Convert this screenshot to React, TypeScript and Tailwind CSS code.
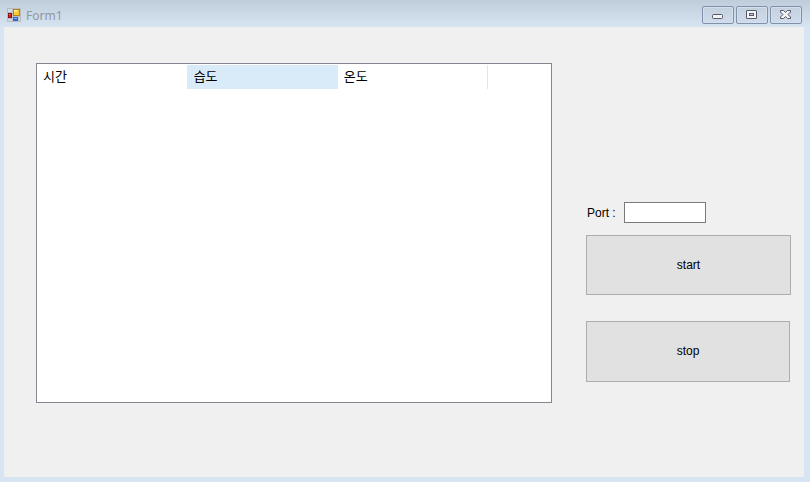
import React, { useState } from 'react';

interface CaptionButtonProps {
  label: string;
  children: React.ReactNode;
}

const columns = ['시간', '습도', '온도'];

const CaptionButton: React.FC<CaptionButtonProps> = ({ label, children }) => (
  <button
    aria-label={label}
    className="w-8 h-[18px] flex items-center justify-center rounded-xs border border-[#8291ab] bg-linear-to-b from-[#c3d0de] to-[#d0dceb] shadow-[inset_0_0_0_1px_#d3dfed]"
  >
    {children}
  </button>
);

const FormIcon = () => (
  <svg width="14" height="14" viewBox="0 0 14 14" shapeRendering="crispEdges" aria-hidden="true">
    <rect x="0" y="0" width="14" height="14" fill="#b9bdc2" />
    <path d="M1 1h4v3H1zM1 11h4v2H1zM12 9h1v4h-1z" fill="#d0dae5" />
    <rect x="1" y="5" width="4" height="5" fill="#8c1210" />
    <rect x="2" y="6" width="2" height="3" fill="#d02a1e" />
    <rect x="2" y="6" width="1" height="1" fill="#f0796b" />
    <rect x="6" y="1" width="7" height="7" fill="#b98410" />
    <rect x="7" y="2" width="5" height="5" fill="#fdc92f" />
    <rect x="7" y="2" width="3" height="2" fill="#ffe891" />
    <rect x="6" y="9" width="5" height="4" fill="#2f6bd0" />
    <rect x="7" y="10" width="3" height="1" fill="#7fb0f5" />
  </svg>
);

const App: React.FC = () => {
  const [port, setPort] = useState('');

  return (
    <div className="min-h-screen flex flex-col bg-[#d7e4f2] pl-1 pr-1.5 pb-[5px] font-['Liberation_Sans','Noto_Sans_CJK_KR',sans-serif] text-xs text-black">
      {/* Title bar */}
      <header className="h-[27px] -ml-1 -mr-1.5 pl-[7px] pr-2 pt-[3px] flex items-center justify-between bg-linear-to-b from-[#bfcddb] to-[#d7e4f2]">
        <div className="flex items-center gap-[5px]">
          <FormIcon />
          <h1 className="pt-0.5 font-['Noto_Sans',sans-serif] text-xs leading-4 text-[#93979d]">Form1</h1>
        </div>
        <div className="flex gap-0.5">
          <CaptionButton label="Minimize">
            <svg width="12" height="6" viewBox="0 0 12 6" className="mt-1">
              <rect x="0.5" y="0.5" width="10" height="4" rx="1" fill="#f4f4f4" stroke="#545768" />
            </svg>
          </CaptionButton>
          <CaptionButton label="Maximize">
            <svg width="12" height="10" viewBox="0 0 12 10">
              <rect x="0.5" y="0.5" width="10" height="8" rx="0.5" fill="#f4f4f4" stroke="#545768" />
              <rect x="3.5" y="3.5" width="4" height="2" fill="#c5d2e0" stroke="#545768" />
            </svg>
          </CaptionButton>
          <CaptionButton label="Close">
            <svg width="12" height="10" viewBox="0 0 12 10">
              <path
                d="M0.5 0.5h3l2 2 2-2h3v1.5l-2.5 2.5 2.5 2.5v1.5h-3l-2-2-2 2h-3v-1.5l2.5-2.5-2.5-2.5z"
                fill="#f4f4f4"
                stroke="#545768"
                strokeLinejoin="round"
              />
            </svg>
          </CaptionButton>
        </div>
      </header>

      <main className="flex-1 flex gap-[34px] bg-[#f0f0f0] pl-8 pr-[13px] pt-9 pb-[74px]">
        {/* Measurement list */}
        <div className="flex-1 border border-[#828790] bg-white pt-px">
          <table className="table-fixed w-[451px]">
            <thead>
              <tr className="h-6">
                {columns.map((column) => (
                  <th
                    key={column}
                    scope="col"
                    className="p-0 pl-1.5 text-left text-[13px] leading-4 font-normal border-r border-[#e5e5e5] nth-1:border-[#d9ebf9] nth-2:border-[#d9ebf9] nth-2:bg-[#d9ebf9]"
                  >
                    {column}
                  </th>
                ))}
              </tr>
            </thead>
          </table>
        </div>

        {/* Port controls */}
        <div className="w-[205px] pt-[139px]">
          <div className="flex items-center gap-1.5 mb-3">
            <label htmlFor="port" className="w-8 pl-px whitespace-nowrap">Port :</label>
            <input
              id="port"
              value={port}
              onChange={(e) => setPort(e.target.value)}
              className="w-[82px] h-[21px] px-1 border border-[#7a7a7a] bg-white outline-none"
            />
          </div>
          <button className="block w-full h-[60px] mb-[26px] border border-[#adadad] bg-[#e1e1e1]">start</button>
          <button className="block w-[204px] h-[61px] pb-0.5 border border-[#adadad] bg-[#e1e1e1]">stop</button>
        </div>
      </main>
    </div>
  );
};

export default App;
